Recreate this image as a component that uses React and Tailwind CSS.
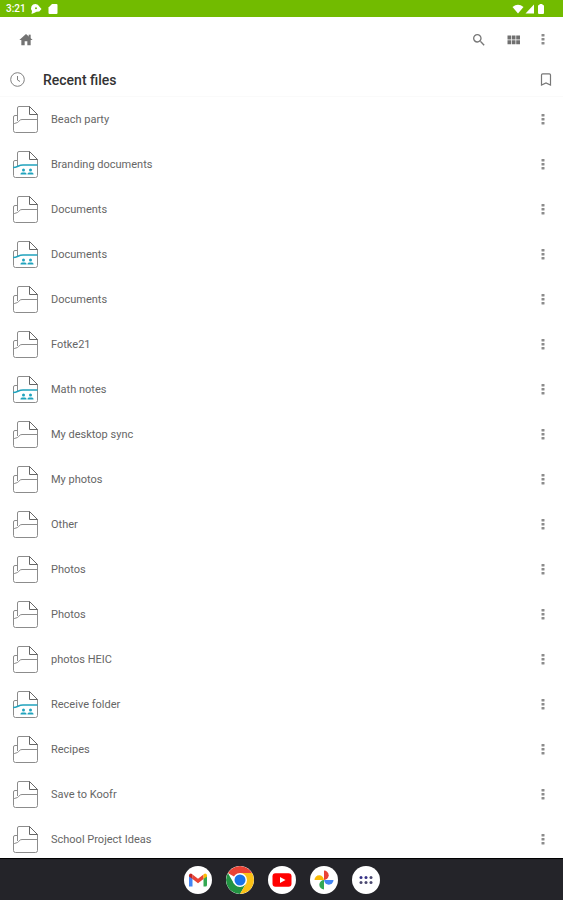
import React from "react";

const files = [
  { name: "Beach party" },
  { name: "Branding documents", shared: true },
  { name: "Documents" },
  { name: "Documents", shared: true },
  { name: "Documents" },
  { name: "Fotke21" },
  { name: "Math notes", shared: true },
  { name: "My desktop sync" },
  { name: "My photos" },
  { name: "Other" },
  { name: "Photos" },
  { name: "Photos" },
  { name: "photos HEIC" },
  { name: "Receive folder", shared: true },
  { name: "Recipes" },
  { name: "Save to Koofr" },
  { name: "School Project Ideas" },
];

function FolderIcon({ shared }) {
  return (
    <svg viewBox="0 0 26 28" className="h-7 w-[26px] shrink-0" fill="none" aria-hidden="true">
      <path
        d="M5.500 15V2Q5.500 .5 7 .5H17.500L25.500 8.500V24.500Q25.500 26.500 23.500 26.500H3.500Q1.500 26.500 1.500 24.500V11Q1.500 9.500 3 9.500H5.500"
        stroke="#8c8c8c"
      />
      <path d="M17.500 .5V8.500H25.500Z" stroke="#666666" strokeLinejoin="round" />
      {shared ? (
        <>
          <path d="M1 16.500C6 16.500 6 14 11 14H25.500" stroke="#21a3bd" strokeWidth="1.500" />
          <g fill="#21a3bd">
            <circle cx="11.500" cy="19" r="1.500" />
            <circle cx="18.500" cy="19" r="1.500" />
            <path d="M8.500 23.500V23Q8.500 21.500 10 21.500H13Q14.500 21.500 14.500 23V23.500ZM15.500 23.500V23Q15.500 21.500 17 21.500H20Q21.500 21.500 21.500 23V23.500Z" />
          </g>
        </>
      ) : (
        <path d="M1.500 18Q2 17.500 5.500 16.500C7 16 7 13.500 10 13.500H25.500" stroke="#8c8c8c" />
      )}
    </svg>
  );
}

function MoreIcon() {
  return (
    <svg viewBox="0 0 4 14" className="h-3.5 w-1" fill="#8c8c8c" aria-hidden="true">
      <rect x="0.500" y="1" width="3" height="2.500" rx="0.500" />
      <rect x="0.500" y="5" width="3" height="2.500" rx="0.500" />
      <rect x="0.500" y="9" width="3" height="2.500" rx="0.500" />
    </svg>
  );
}

function StatusBar() {
  return (
    <div className="flex h-[17px] shrink-0 items-center bg-[#72bb00] pt-px pr-[18px] pl-1.5 text-white">
      <span className="text-[10px] leading-4 font-medium">3:21</span>
      <svg viewBox="0 0 12 12" className="ml-1 h-3 w-3" fill="#fff" aria-hidden="true">
        <path
          fillRule="evenodd"
          d="M5.500 1A4 4 0 0 1 9.300 3.500L11.500 6 9.300 8.500 6.500 8.700 4 10 1.500 11 2 8A4.300 4.300 0 0 1 5.500 1ZM6 4.300A1 1 0 1 0 6 6.300 1 1 0 0 0 6 4.300Z"
        />
      </svg>
      <svg viewBox="0 0 10 12" className="ml-1.5 h-3 w-2.5" fill="#fff" aria-hidden="true">
        <path d="M4 1H8.500Q9.500 1 9.500 2V10Q9.500 11 8.500 11H1.500Q.5 11 .5 10V4.500Z" />
      </svg>
      <svg viewBox="0 0 12 10" className="ml-auto h-2.5 w-3" fill="#fff" aria-hidden="true">
        <path d="M.5 3Q6-1.500 11.500 3L6 9.500Z" />
      </svg>
      <svg viewBox="0 0 10 10" className="ml-px h-2.5 w-2.5" fill="#fff" aria-hidden="true">
        <path d="M9 .5V9.500H.5Z" />
      </svg>
      <svg viewBox="0 0 8 12" className="ml-0.5 h-3 w-2" fill="#fff" aria-hidden="true">
        <path d="M2.500 1H5.500V2H6Q7 2 7 3V10Q7 11 6 11H2Q1 11 1 10V3Q1 2 2 2H2.500Z" />
      </svg>
    </div>
  );
}

function Toolbar() {
  return (
    <nav aria-label="Toolbar" className="flex h-[46px] shrink-0 items-center px-[18px]">
      <button type="button" aria-label="Home" className="flex h-8 w-4 items-center justify-center">
        <svg viewBox="0 0 24 24" className="h-4 w-4 shrink-0" fill="#737373">
          <path d="M10 20v-6h4v6h5v-8h3L12 3 2 12h3v8z" />
          <path d="M16 4h3v6h-3z" />
        </svg>
      </button>
      <button type="button" aria-label="Search" className="ml-auto flex h-8 w-4 items-center justify-center">
        <svg viewBox="0 0 24 24" className="h-4 w-4 shrink-0" fill="#777777">
          <path d="M15.500 14h-.79l-.28-.27A6.471 6.471 0 0 0 16 9.500 6.500 6.500 0 1 0 9.500 16c1.610 0 3.090-.59 4.230-1.570l.27.28v.79l5 4.990L20.490 19l-4.990-5zm-6 0C7.010 14 5 11.990 5 9.500S7.010 5 9.500 5 14 7.010 14 9.500 11.990 14 9.500 14z" />
        </svg>
      </button>
      <button type="button" aria-label="Grid view" className="ml-5 flex h-8 w-3.5 items-center justify-center">
        <svg viewBox="0 0 14 10" className="h-2.5 w-3.5 shrink-0" fill="#707070">
          <path d="M.5 .5H4.200V4.500H.5ZM4.900 .5H8.500V4.500H4.900ZM9.200 .5H13V4.500H9.200ZM.5 5.300H4.200V9.300H.5ZM4.900 5.300H8.500V9.300H4.900ZM9.200 5.300H13V9.300H9.200Z" />
        </svg>
      </button>
      <button type="button" aria-label="More options" className="ml-5 flex h-8 w-1 items-center justify-center">
        <MoreIcon />
      </button>
    </nav>
  );
}

function GmailIcon() {
  return (
    <svg viewBox="0 0 28 28" className="h-7 w-7">
      <path d="M5 9.500V20.500H8.500V12Z" fill="#4285f4" />
      <path d="M19.500 12V20.500H21.500Q23 20.500 23 19V9.500Z" fill="#34a853" />
      <path d="M8.500 8.500 14 12.700 19.500 8.500V13L14 17.200 8.500 13Z" fill="#ea4335" />
      <path d="M5 10.400V9.500Q5 7.500 7 7.500L8.500 8.500V13Z" fill="#c5221f" />
      <path d="M23 10.400V9.500Q23 7.500 21 7.500L19.500 8.500V13Z" fill="#fbbc04" />
    </svg>
  );
}

function ChromeIcon() {
  return (
    <svg viewBox="0 0 28 28" className="h-7 w-7">
      <path d="M14 14 1.880 7A14 14 0 0 1 26.120 7Z" fill="#ea4335" />
      <path d="M14 28A14 14 0 0 1 1.880 7L7.940 17.500 14 14 20.060 17.500Z" fill="#229342" />
      <path d="M14 7H26.120A14 14 0 0 1 14 28L20.060 17.500Z" fill="#fbc116" />
      <circle cx="14" cy="14" r="7" fill="#fff" />
      <circle cx="14" cy="14" r="5.500" fill="#1a73e8" />
    </svg>
  );
}

function YoutubeIcon() {
  return (
    <svg viewBox="0 0 28 28" className="h-7 w-7">
      <rect x="4.500" y="7.300" width="19" height="13.400" rx="3" fill="#ff0000" />
      <path d="M12 11V17L17.500 14Z" fill="#fff" />
    </svg>
  );
}

function PhotosIcon() {
  return (
    <svg viewBox="0 0 28 28" className="h-7 w-7">
      <path d="M14 4.500A4.700 4.700 0 0 1 14 13.900Z" fill="#ea4335" />
      <path d="M23.500 14A4.700 4.700 0 0 1 14.100 14Z" fill="#4285f4" />
      <path d="M14 23.500A4.700 4.700 0 0 1 14 14.100Z" fill="#34a853" />
      <path d="M4.500 14A4.700 4.700 0 0 1 13.900 14Z" fill="#fbbc04" />
    </svg>
  );
}

function AppsIcon() {
  return (
    <svg viewBox="0 0 28 28" className="h-7 w-7" fill="#4b4970">
      <circle cx="9" cy="11.500" r="1.500" fill="#353086" />
      <circle cx="14" cy="11.500" r="1.500" fill="#353086" />
      <circle cx="19" cy="11.500" r="1.500" />
      <circle cx="9" cy="16.500" r="1.500" />
      <circle cx="14" cy="16.500" r="1.500" />
      <circle cx="19" cy="16.500" r="1.500" />
    </svg>
  );
}

const apps = [
  { name: "Gmail", Icon: GmailIcon },
  { name: "Chrome", Icon: ChromeIcon },
  { name: "YouTube", Icon: YoutubeIcon },
  { name: "Photos", Icon: PhotosIcon },
  { name: "All apps", Icon: AppsIcon },
];

export default function App() {
  return (
    <div className="flex h-screen flex-col bg-white font-[Roboto,sans-serif]">
      <StatusBar />
      <Toolbar />
      <header className="flex h-[34px] shrink-0 items-center border-b border-[#fafafa] px-2.5">
        <svg viewBox="0 0 16 16" className="h-4 w-4" fill="none" stroke="#808080" aria-hidden="true">
          <circle cx="7.500" cy="7.500" r="6.800" />
          <path d="M7.500 4V8L10 9.500" />
        </svg>
        <h1 className="ml-[17px] text-[14px] leading-5 font-medium text-[#333333]">Recent files</h1>
        <button type="button" aria-label="Bookmark" className="ml-auto flex h-6 w-3.5 items-center justify-center">
          <svg viewBox="0 0 14 14" className="h-3.5 w-3.5 shrink-0" fill="none" stroke="#777777" strokeWidth="1.200">
            <path d="M2.500 12V2Q2.500 .8 3.700 .8H10.300Q11.500 .8 11.500 2V12L7 10Z" />
          </svg>
        </button>
      </header>
      <main className="min-h-0 flex-1 overflow-hidden">
        <ul>
          {files.map((file, i) => (
            <li key={i} className="flex h-[45px] items-center pr-[18px] pl-3">
              <FolderIcon shared={file.shared} />
              <span className="ml-[13px] text-[11px] leading-4 text-[#666666]">{file.name}</span>
              <button
                type="button"
                aria-label={`Options for ${file.name}`}
                className="ml-auto flex h-8 w-1 items-center justify-center"
              >
                <MoreIcon />
              </button>
            </li>
          ))}
        </ul>
      </main>
      <footer className="flex h-[42px] shrink-0 items-center justify-center gap-3.5 border-t border-black bg-[#242429]">
        {apps.map(({ name, Icon }) => (
          <button
            key={name}
            type="button"
            aria-label={name}
            className="h-7 w-7 overflow-hidden rounded-full bg-white"
          >
            <Icon />
          </button>
        ))}
      </footer>
    </div>
  );
}
